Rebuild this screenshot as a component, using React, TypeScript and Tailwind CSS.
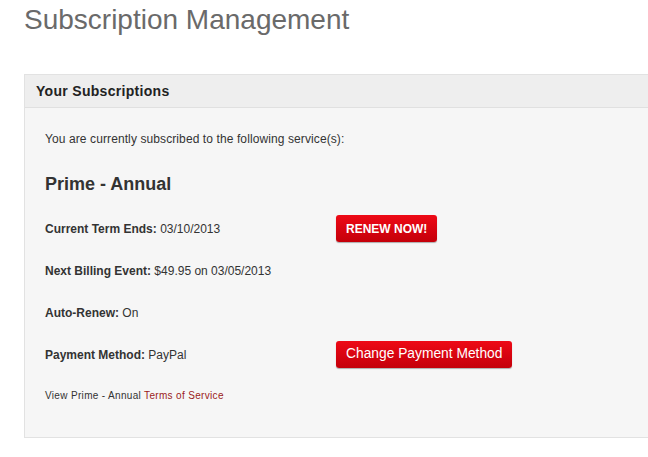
import React from "react";

const Row = ({ label, value, children }: { label: string; value: string; children?: React.ReactNode }) => (
  <div className="flex items-center h-[27px]">
    <div className="w-[291px] text-[12px] text-[#333]">
      <span className="font-bold">{label}</span> {value}
    </div>
    {children}
  </div>
);

export default function App() {
  return (
    <div className="w-[648px] h-[457px] bg-white overflow-hidden" style={{ fontFamily: '"Liberation Sans", Arial, sans-serif' }}>
      <h1 className="pl-[24px] pt-[4px] text-[28px] leading-[32px] text-[#6a6a6a]">Subscription Management</h1>
      <div className="ml-[24px] mt-[38px] w-[640px] border border-[#e2e2e2] border-r-0">
        <div className="h-[33px] bg-[#eeeeee] border-b border-[#e0e0e0] flex items-center pl-[11px] text-[14px] font-bold text-[#222] tracking-[0.3px]">
          Your Subscriptions
        </div>
        <div className="bg-[#f6f6f6] pl-[20px] pt-[24px] h-[329px]">
          <div className="text-[12px] text-[#333] leading-[14px] tracking-[0.1px]">You are currently subscribed to the following service(s):</div>
          <div className="mt-[28px] text-[18px] font-bold text-[#333] leading-[20px]">Prime - Annual</div>
          <div className="mt-[21px] flex flex-col gap-[15px]">
            <Row label="Current Term Ends:" value="03/10/2013">
              <button className="h-[27px] px-[10px] rounded-[3px] text-white text-[12px] font-bold bg-gradient-to-b from-[#ee0a16] to-[#c4000a] shadow-[0_1px_1px_rgba(0,0,0,0.3)]">
                RENEW NOW!
              </button>
            </Row>
            <Row label="Next Billing Event:" value="$49.95 on 03/05/2013" />
            <Row label="Auto-Renew:" value="On" />
            <Row label="Payment Method:" value="PayPal">
              <button className="h-[27px] px-[10px] rounded-[3px] text-white text-[13.8px] bg-gradient-to-b from-[#ee0a16] to-[#c4000a] shadow-[0_1px_1px_rgba(0,0,0,0.3)]">
                Change Payment Method
              </button>
            </Row>
          </div>
          <div className="mt-[20px] text-[10px] text-[#333] tracking-[0.33px]">
            View Prime - Annual <span className="text-[#9b1b1b]">Terms of Service</span>
          </div>
        </div>
      </div>
    </div>
  );
}
